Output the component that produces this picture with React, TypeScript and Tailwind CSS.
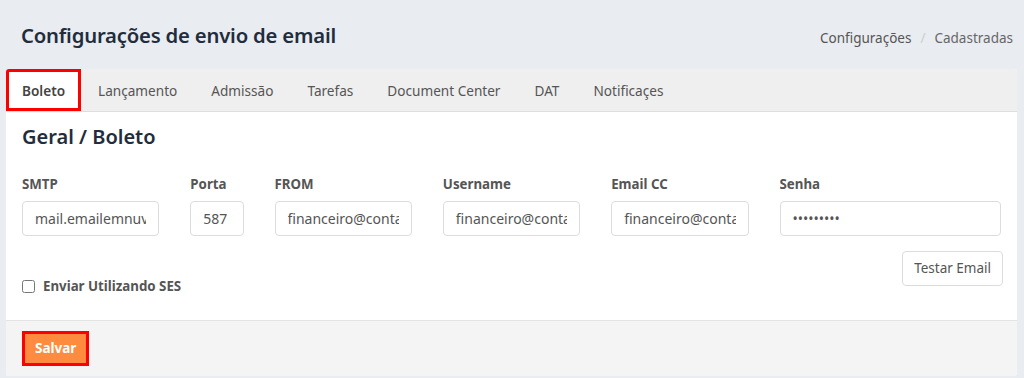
import { useState } from 'react'

const tabs = ['Boleto', 'Lançamento', 'Admissão', 'Tarefas', 'Document Center', 'DAT', 'Notificaçes']

interface FieldProps {
  label: string
  value: string
  span: string
  type?: string
}

function Field({ label, value, span, type = 'text' }: FieldProps) {
  return (
    <div className={span}>
      <label className="block text-[13.3px] font-bold text-[#555] leading-5 mb-[7px]">{label}</label>
      <input
        type={type}
        defaultValue={value}
        className="block w-full h-[35px] px-[12px] border border-[#dcdcdc] rounded-[4px] text-[14px] text-[#555] bg-white outline-none"
      />
    </div>
  )
}

export default function App() {
  const [active, setActive] = useState(0)
  const [ses, setSes] = useState(false)

  return (
    <div className="min-h-[378px] bg-[#e9ecf1] pl-[6px] pr-[7px] font-['Noto_Sans',sans-serif]">
      {/* Page header */}
      <div className="h-[69px] flex items-center justify-between pl-[15px] pr-[4px]">
        <h1 className="text-[20.3px] font-semibold text-[#1f2d3d] tracking-[-0.2px] mt-[2px]">Configurações de envio de email</h1>
        <nav className="flex items-center gap-[9px] text-[13.5px] text-[#555] mt-[8px]">
          <span>Configurações</span>
          <span className="text-[#ccc]">/</span>
          <span className="text-[#666]">Cadastradas</span>
        </nav>
      </div>

      {/* Card */}
      <div className="bg-white rounded-[3px] overflow-hidden h-[307px] flex flex-col">
        <div className="h-[43px] bg-[#efefef] border-b border-[#dedede] flex items-stretch">
          {tabs.map((t, i) => (
            <button
              key={t}
              onClick={() => setActive(i)}
              className={
                i === active
                  ? 'px-[13px] pt-[2px] bg-white border-[3px] border-[#ff0000] text-[13.6px] font-semibold text-[#444]'
                  : 'px-[17px] pt-[3px] text-[13.6px] text-[#555]'
              }
            >
              {t}
            </button>
          ))}
        </div>

        <div className="flex-1 px-[16px] pt-[11px]">
          <h2 className="text-[20px] font-semibold text-[#1f2d3d] leading-7">Geral / Boleto</h2>
          <div className="grid grid-cols-12 gap-x-[31px] mt-[23px]">
            <Field label="SMTP" value="mail.emailemnuvem.com.br" span="col-span-2" />
            <Field label="Porta" value="587" span="col-span-1" />
            <Field label="FROM" value="financeiro@contabilidade.com.br" span="col-span-2" />
            <Field label="Username" value="financeiro@contabilidade.com.br" span="col-span-2" />
            <Field label="Email CC" value="financeiro@contabilidade.com.br" span="col-span-2" />
            <Field label="Senha" value="123456789" span="col-span-3" type="password" />
          </div>
          <div className="flex justify-end mt-[15px] -mr-[2px]">
            <button className="h-[35px] px-[11px] border border-[#dcdcdc] rounded-[4px] text-[13.5px] text-[#555] bg-white">
              Testar Email
            </button>
          </div>
          <label className="flex items-center gap-[8px] text-[13.3px] font-bold text-[#555] -mt-[9px]">
            <input
              type="checkbox"
              checked={ses}
              onChange={() => setSes(!ses)}
              className="w-[13px] h-[13px] m-0"
            />
            Enviar Utilizando SES
          </label>
        </div>

        <div className="h-[56px] bg-[#f4f4f4] border-t border-[#e3e3e3] flex items-center px-[16px]">
          <button className="h-[35px] px-[10px] bg-[#ff8c3e] border-[3px] border-[#ff0000] text-white text-[13.5px] font-bold">
            Salvar
          </button>
        </div>
      </div>
    </div>
  )
}
